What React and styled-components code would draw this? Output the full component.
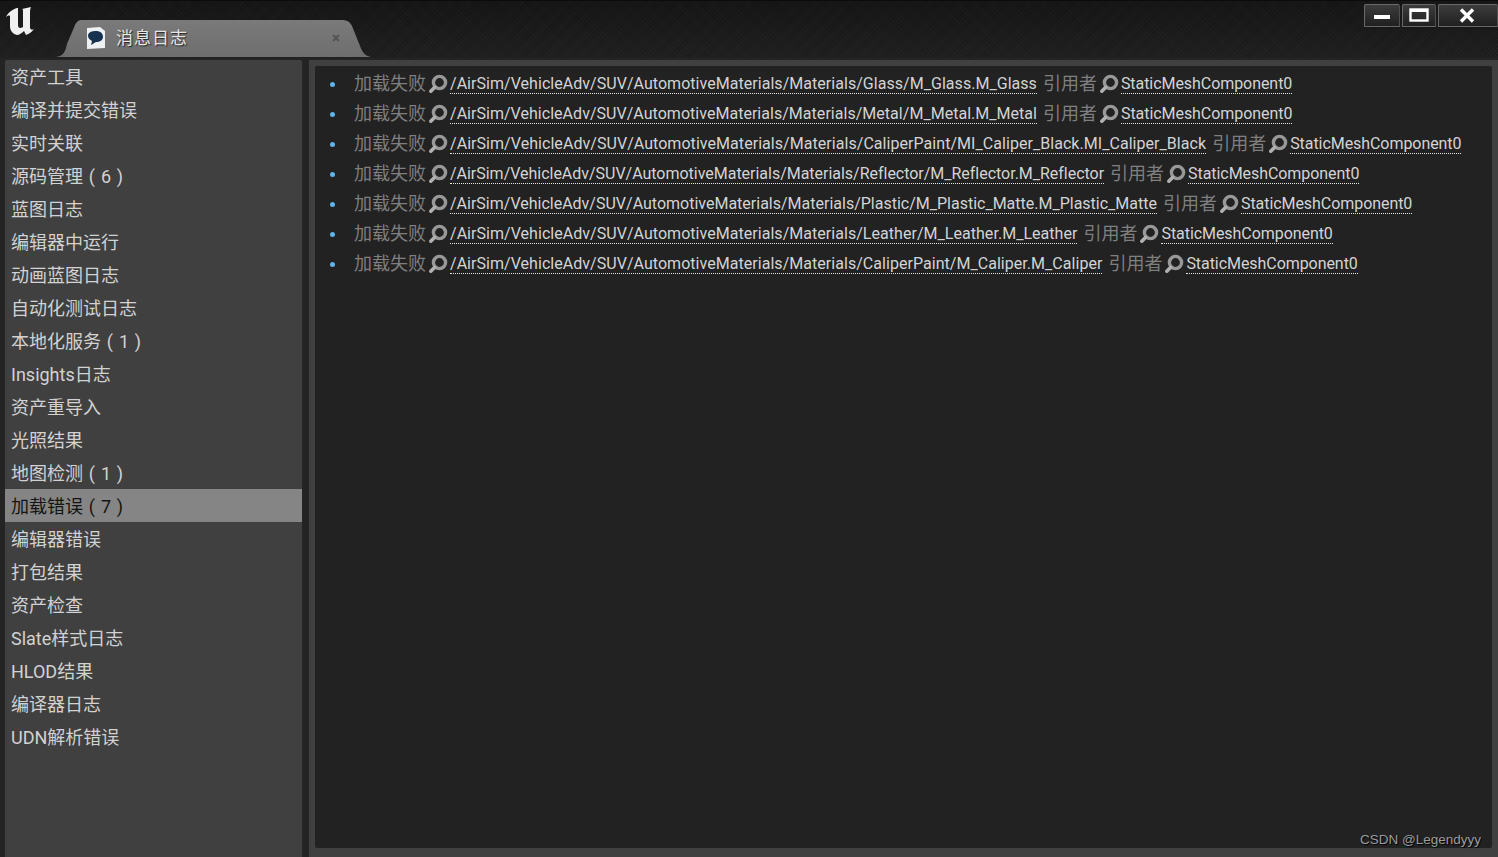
import React from "react";
import styled, { createGlobalStyle } from "styled-components";

const Global = createGlobalStyle`
  html, body { margin: 0; padding: 0; height: 100%; background: #252525; overflow: hidden; }
  #root { height: 100%; }
`;

const FONT = `Roboto, "Noto Sans CJK SC", sans-serif`;

const Page = styled.div`
  width: 1498px;
  height: 857px;
  display: flex;
  flex-direction: column;
  overflow: hidden;
  background: #242424;
  font-family: ${FONT};
`;

const TitleBar = styled.header`
  height: 58px;
  flex: none;
  display: flex;
  align-items: flex-start;
  background-color: #1a1a1a;
  background-image:
    repeating-linear-gradient(45deg, rgba(255,255,255,.014) 0 1px, transparent 1px 3px),
    repeating-linear-gradient(-45deg, rgba(0,0,0,.14) 0 1px, transparent 1px 2px),
    linear-gradient(#161616, #212121);
  border-top: 1px solid #0c0c0c;
  box-sizing: border-box;
`;

const Logo = styled.svg`
  width: 30px;
  height: 32px;
  margin: 5px 0 0 5px;
  flex: none;
`;

const Tab = styled.div`
  width: 315px;
  height: 37px;
  margin: 19px 0 0 21px;
  flex: none;
  display: flex;
  align-items: center;
  padding: 0 31px 2px 29px;
  box-sizing: border-box;
  background: linear-gradient(#7a7a7a, #6e6e6e);
  clip-path: path("M0 37 C6 36 9 34 11 24 L19 5 C21 1 23 0 26 0 L286 0 C291 0 294 2 296 6 L304 26 C307 34 310 36 315 37 Z");
`;

const TabIcon = styled.svg`
  width: 20px;
  height: 22px;
  flex: none;
`;

const TabTitle = styled.span`
  margin: 0 0 2px 11px;
  font-size: 17px;
  letter-spacing: 1px;
  color: #e6e6e6;
  text-shadow: 1px 1px 1px #222;
  flex: 1;
`;

const TabClose = styled.svg`
  width: 8px;
  height: 8px;
  flex: none;
`;

const WindowButtons = styled.div`
  margin: 3px 0 0 auto;
  display: flex;
  gap: 2px;
`;

const WinButton = styled.div`
  width: ${p => p.$w}px;
  height: 23px;
  padding: 0 ${p => p.$shift || 0}px 1px 0;
  display: flex;
  align-items: center;
  justify-content: center;
  box-sizing: border-box;
  border: 1px solid #686868;
  border-right-color: #505050;
  border-radius: 2px 2px 0 0;
  background: linear-gradient(#3c3c3c, #202020);
  box-shadow: 0 2px 0 #181818;
`;

const Body = styled.main`
  flex: 1;
  display: flex;
  gap: 7px;
  padding: 2px 0 0 5px;
  min-height: 0;
`;

const Sidebar = styled.nav`
  width: 297px;
  flex: none;
  background: #404040;
  border-radius: 2px 2px 0 0;
  display: flex;
  flex-direction: column;
`;

const NavItem = styled.div`
  height: 33px;
  flex: none;
  display: flex;
  align-items: center;
  padding: 0 0 2px 6px;
  box-sizing: border-box;
  font-size: 18px;
  word-spacing: 1.4px;
  white-space: pre;
  color: ${p => (p.$active ? "#141414" : "#d2d2d2")};
  background: ${p => (p.$active ? "#858585" : "transparent")};
`;

const LogPanel = styled.section`
  flex: 1;
  background: #404040;
  padding: 6px 6px 9px 6px;
  display: flex;
  min-width: 0;
`;

const LogArea = styled.div`
  flex: 1;
  min-width: 0;
  position: relative;
  background: #222222;
  border-radius: 2px;
  padding-top: 3px;
`;

const LogRow = styled.div`
  height: 30px;
  display: flex;
  align-items: center;
  white-space: nowrap;
  padding: 0 0 2px 15px;
  box-sizing: border-box;
`;

const Bullet = styled.i`
  width: 5px;
  height: 5px;
  border-radius: 50%;
  background: #5fb4ee;
  flex: none;
  margin: 2px 19px 0 0;
`;

const Muted = styled.span`
  font-size: 18px;
  color: #7f7f7f;
  margin: 0 0 2px ${p => p.$gap || 0}px;
`;

const LinkText = styled.span`
  font-size: 16px;
  letter-spacing: ${p => p.$ls}px;
  color: #d4d4d4;
  border-bottom: 1px dotted #e8e8e8;
  line-height: 19px;
  margin-top: 1px;
`;

const Search = styled.svg`
  width: 20px;
  height: 20px;
  flex: none;
  margin: 1px 2px 0 2px;
`;

const Watermark = styled.div`
  position: absolute;
  right: 11px;
  bottom: 1px;
  font-family: "Liberation Sans", sans-serif;
  font-size: 13.5px;
  color: #9c9c9c;
  text-shadow: 1px 1px 1px #000;
`;

const NAV = ["资产工具","编译并提交错误","实时关联","源码管理 ( 6 )","蓝图日志","编辑器中运行","动画蓝图日志","自动化测试日志","本地化服务 ( 1 )","Insights日志","资产重导入","光照结果","地图检测 ( 1 )","加载错误 ( 7 )","编辑器错误","打包结果","资产检查","Slate样式日志","HLOD结果","编译器日志","UDN解析错误"];

const BASE = "/AirSim/VehicleAdv/SUV/AutomotiveMaterials/Materials/";
const ROWS = [
  { path: "Glass/M_Glass.M_Glass", ls: 0.04 },
  { path: "Metal/M_Metal.M_Metal", ls: 0.03 },
  { path: "CaliperPaint/MI_Caliper_Black.MI_Caliper_Black", ls: 0.05 },
  { path: "Reflector/M_Reflector.M_Reflector", ls: -0.02 },
  { path: "Plastic/M_Plastic_Matte.M_Plastic_Matte", ls: 0 },
  { path: "Leather/M_Leather.M_Leather", ls: 0.04 },
  { path: "CaliperPaint/M_Caliper.M_Caliper", ls: 0.04 },
];

const SearchIcon = () => (
  <Search viewBox="0 0 20 20">
    <circle cx="11.5" cy="8.5" r="6.1" fill="none" stroke="#989898" strokeWidth="3.4" />
    <path d="M6.5 13.5 L2.8 17.2" stroke="#b0b0b0" strokeWidth="3.6" strokeLinecap="round" />
  </Search>
);

export default function App() {
  return (
    <Page>
      <Global />
      <TitleBar>
        <Logo viewBox="0 0 30 32">
          <path fill="#f0f0f0" d="M1 11 C3 7 6 4 12 2 L13 2 L13 19 C13 22 15 23 18 21 L18 6 C18 4 18 3 17 3 L26 1 C25 3 25 5 25 8 L25 22 C26 24 27 24 29 23 C27 26 24 28 21 29 L19 25 C17 27 14 29 12 29 C8 28 5 25 5 20 L5 10 C4 9 2 10 1 11 Z" />
        </Logo>
        <Tab>
          <TabIcon viewBox="0 0 20 22">
            <path fill="#eef1f4" d="M2 1 L15 0 L20 4 L20 21 L2 22 Z" />
            <path fill="#16324f" d="M3 9 C3 5 7 4 11 4 C15 4 18 6 18 10 C18 13 15 15 11 15 L6 18 L7 14 C5 13 3 11 3 9 Z" />
          </TabIcon>
          <TabTitle>消息日志</TabTitle>
          <TabClose viewBox="0 0 8 8"><path d="M1 1 L7 7 M7 1 L1 7" stroke="#555" strokeWidth="2" /></TabClose>
        </Tab>
        <WindowButtons>
          <WinButton $w={36}><svg width="16" height="8" viewBox="0 0 16 8"><rect width="16" height="4" y="4" fill="#fff" /></svg></WinButton>
          <WinButton $w={34}><svg width="20" height="14" viewBox="0 0 20 14"><rect x="1.5" y="1.5" width="17" height="11" fill="none" stroke="#fff" strokeWidth="2.4" /><rect x="1" y="1" width="18" height="3" fill="#fff" /></svg></WinButton>
          <WinButton $w={60} $shift={2}><svg width="16" height="15" viewBox="0 0 16 15"><path d="M2 1.5 L14 13.5 M14 1.5 L2 13.5" stroke="#fff" strokeWidth="3.4" /></svg></WinButton>
        </WindowButtons>
      </TitleBar>
      <Body>
        <Sidebar>
          {NAV.map(n => <NavItem key={n} $active={n.startsWith("加载错误")}>{n}</NavItem>)}
        </Sidebar>
        <LogPanel>
          <LogArea>
            {ROWS.map(r => (
              <LogRow key={r.path}>
                <Bullet />
                <Muted>加载失败</Muted>
                <SearchIcon />
                <LinkText $ls={r.ls}>{BASE + r.path}</LinkText>
                <Muted $gap={6}>引用者</Muted>
                <SearchIcon />
                <LinkText $ls={-0.06}>StaticMeshComponent0</LinkText>
              </LogRow>
            ))}
            <Watermark>CSDN @Legendyyy</Watermark>
          </LogArea>
        </LogPanel>
      </Body>
    </Page>
  );
}
